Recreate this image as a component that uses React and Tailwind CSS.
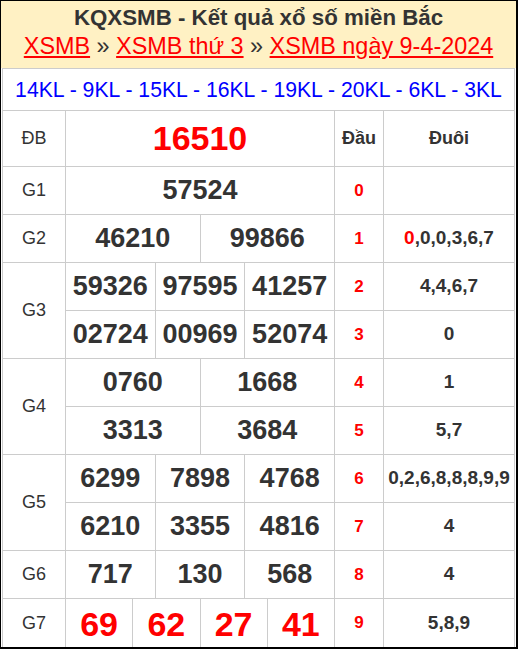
import React from 'react';

const font = 'font-[family-name:Liberation_Sans,Arial,sans-serif]';

const dau = ['0', '1', '2', '3', '4', '5', '6', '7', '8', '9'];
const duoi = ['', '0,0,0,3,6,7', '4,4,6,7', '0', '1', '5,7', '0,2,6,8,8,8,9,9', '4', '4', '5,8,9'];

// one row of numbers inside the wide column
const Nums = ({ items, cols, big, red }) => (
  <div className={`grid ${cols} gap-px bg-[#ccc]`}>
    {items.map((n, i) => (
      <div
        key={i}
        className={`bg-white flex items-center justify-center font-bold ${
          big ? 'text-[34px]' : 'text-[27px]'
        } ${red ? 'text-[#f00]' : 'text-[#333]'}`}
      >
        {n}
      </div>
    ))}
  </div>
);

export default function App() {
  const cell = 'bg-white flex items-center justify-center';
  const label = 'col-start-1 bg-white flex items-center justify-center text-[18px] text-[#333]';

  return (
    <div
      className={`${font} w-[518px] h-[649px] border-l border-t border-r-2 border-b-2 border-black bg-white flex flex-col overflow-hidden`}
    >
      <div className="h-[67px] bg-[#fff1c4] flex flex-col items-center pt-[3px]">
        <div className="text-[22.3px] leading-[28px] font-bold text-[#333]">KQXSMB - Kết quả xổ số miền Bắc</div>
        <div className="text-[23.4px] leading-[29px] text-[#333]">
          <a href="#" className="text-[#f00] underline">XSMB</a>
          {' » '}
          <a href="#" className="text-[#f00] underline">XSMB thứ 3</a>
          {' » '}
          <a href="#" className="text-[#f00] underline">XSMB ngày 9-4-2024</a>
        </div>
      </div>

      <div className="mx-px bg-[#ccc] px-px pt-px flex flex-col gap-px">
        <div className="h-[41px] bg-white flex items-center justify-center text-[21.2px] text-[#0000ff]">
          14KL - 9KL - 15KL - 16KL - 19KL - 20KL - 6KL - 3KL
        </div>

        <div className="grid grid-cols-[62px_268px_48px_130px] grid-rows-[55px_repeat(9,47px)_48px] gap-px">
          {/* labels */}
          <div className={`${label} row-start-1`}>ĐB</div>
          <div className={`${label} row-start-2`}>G1</div>
          <div className={`${label} row-start-3`}>G2</div>
          <div className={`${label} row-start-4 row-span-2`}>G3</div>
          <div className={`${label} row-start-6 row-span-2`}>G4</div>
          <div className={`${label} row-start-8 row-span-2`}>G5</div>
          <div className={`${label} row-start-10`}>G6</div>
          <div className={`${label} row-start-11`}>G7</div>

          {/* numbers */}
          <div className="col-start-2 row-start-1 grid"><Nums items={['16510']} cols="grid-cols-1" big red /></div>
          <div className="col-start-2 row-start-2 grid"><Nums items={['57524']} cols="grid-cols-1" /></div>
          <div className="col-start-2 row-start-3 grid"><Nums items={['46210', '99866']} cols="grid-cols-2" /></div>
          <div className="col-start-2 row-start-4 grid"><Nums items={['59326', '97595', '41257']} cols="grid-cols-3" /></div>
          <div className="col-start-2 row-start-5 grid"><Nums items={['02724', '00969', '52074']} cols="grid-cols-3" /></div>
          <div className="col-start-2 row-start-6 grid"><Nums items={['0760', '1668']} cols="grid-cols-2" /></div>
          <div className="col-start-2 row-start-7 grid"><Nums items={['3313', '3684']} cols="grid-cols-2" /></div>
          <div className="col-start-2 row-start-8 grid"><Nums items={['6299', '7898', '4768']} cols="grid-cols-3" /></div>
          <div className="col-start-2 row-start-9 grid"><Nums items={['6210', '3355', '4816']} cols="grid-cols-3" /></div>
          <div className="col-start-2 row-start-10 grid"><Nums items={['717', '130', '568']} cols="grid-cols-3" /></div>
          <div className="col-start-2 row-start-11 grid"><Nums items={['69', '62', '27', '41']} cols="grid-cols-4" big red /></div>

          {/* đầu / đuôi */}
          <div className={`col-start-3 row-start-1 ${cell} text-[18px] font-bold text-[#333]`}>Đầu</div>
          <div className={`col-start-4 row-start-1 ${cell} text-[18px] font-bold text-[#333]`}>Đuôi</div>
          {dau.map((d, i) => (
            <React.Fragment key={d}>
              <div className={`col-start-3 ${cell} text-[17px] font-bold text-[#f00]`} style={{ gridRowStart: i + 2 }}>
                {d}
              </div>
              <div className={`col-start-4 ${cell} text-[19px] font-bold text-[#333] whitespace-nowrap`} style={{ gridRowStart: i + 2 }}>
                {i === 1 ? (
                  <>
                    <span className="text-[#f00]">0</span>
                    {duoi[i].slice(1)}
                  </>
                ) : (
                  duoi[i]
                )}
              </div>
            </React.Fragment>
          ))}
        </div>
      </div>
    </div>
  );
}
